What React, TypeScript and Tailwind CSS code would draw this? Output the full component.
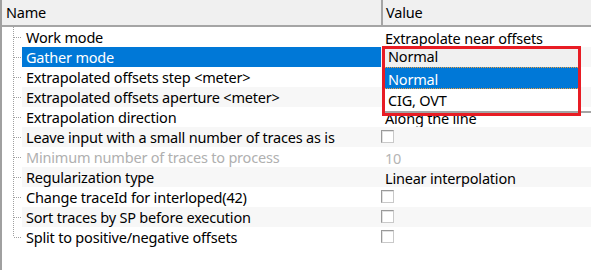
import React from "react";

type Row = {
  name: string;
  value?: string;
  checkbox?: boolean;
  disabled?: boolean;
  selected?: boolean;
};

const rows: Row[] = [
  { name: "Work mode", value: "Extrapolate near offsets" },
  { name: "Gather mode", value: "", selected: true },
  { name: "Extrapolated offsets step <meter>", value: "" },
  { name: "Extrapolated offsets aperture <meter>", value: "" },
  { name: "Extrapolation direction", value: "Along the line" },
  { name: "Leave input with a small number of traces as is", checkbox: true },
  { name: "Minimum number of traces to process", value: "10", disabled: true },
  { name: "Regularization type", value: "Linear interpolation" },
  { name: "Change traceId for interloped(42)", checkbox: true },
  { name: "Sort traces by SP before execution", checkbox: true },
  { name: "Split to positive/negative offsets", checkbox: true },
];

function Tree({ last }: { last: boolean }) {
  return (
    <svg width="20" height="20" className="block shrink-0" shapeRendering="crispEdges">
      <line x1="11.5" y1="0" x2="11.5" y2={last ? 10 : 20} stroke="#a0a0a0" strokeWidth="1" strokeDasharray="1 1" />
      <line x1="12" y1="10.5" x2="20" y2="10.5" stroke="#a0a0a0" strokeWidth="1" strokeDasharray="1 1" />
    </svg>
  );
}

function Checkbox() {
  return (
    <div className="mt-[3px] w-[13px] h-[13px] border border-[#9a9a9a] border-r-[#c9c9c9] border-b-[#c9c9c9] bg-white shadow-[inset_1px_1px_0_#e2e2e2]" />
  );
}

export default function App() {
  return (
    <div
      className="relative w-[591px] h-[270px] overflow-hidden bg-white border-l-2 border-[#a0a0a0] text-[14.5px] tracking-[-0.2px] text-black"
      style={{ fontFamily: '"Noto Sans", "Open Sans", sans-serif' }}
    >
      {/* header */}
      <div className="flex h-[27px] bg-[#f0f0f0] border-b-2 border-b-[#a5a5a5]">
        <div className="w-[381px] h-full border-r-2 border-r-[#a5a5a5] pl-[4px] leading-[25px]">Name</div>
        <div className="flex-1 pl-[3px] leading-[25px]">Value</div>
      </div>

      {/* rows */}
      <div className="flex flex-col">
        {rows.map((r, i) => {
          const shaded = i % 2 === 1;
          const bg = r.selected ? "bg-[#0078d7] text-white" : shaded ? "bg-[#f7f7f7]" : "bg-white";
          const valBg = shaded ? "bg-[#f7f7f7]" : "bg-white";
          return (
            <div key={i} className="flex h-[20px]">
              <Tree last={i === rows.length - 1} />
              <div
                className={`w-[359px] h-full overflow-hidden whitespace-nowrap pl-[4px] leading-[20px] ${bg} ${
                  r.disabled ? "text-[#b0b0b0]" : ""
                }`}
              >
                {r.name}
              </div>
              <div className={`flex-1 h-full overflow-hidden whitespace-nowrap ${valBg}`}>
                {r.checkbox ? (
                  <Checkbox />
                ) : (
                  <div className={`pl-[4px] pt-[1px] leading-[20px] ${r.disabled ? "text-[#b4b4b4]" : ""}`}>
                    {r.value}
                  </div>
                )}
              </div>
            </div>
          );
        })}
      </div>

      {/* open dropdown */}
      <div className="absolute left-[380px] top-[46px] w-[211px] flex flex-col">
        <div className="w-[198px] h-[21px] bg-[#f0f0f0] pl-[6px] leading-[21px]">Normal</div>
        <div className="w-[198px] h-[22px] bg-[#0078d7] text-white pl-[6px] leading-[20px] pt-[1px] border-y border-dotted border-y-[#f0a040]">
          Normal
        </div>
        <div className="w-[198px] h-[22px] bg-white pl-[6px] leading-[23px]">CIG, OVT</div>
        <div className="h-[2px] bg-[#a5a5a5]" />
      </div>

      {/* red annotation */}
      <div className="absolute left-[380px] top-[46px] w-[199px] h-[70px] border-[3px] border-[#e81c24] pointer-events-none" />
    </div>
  );
}
